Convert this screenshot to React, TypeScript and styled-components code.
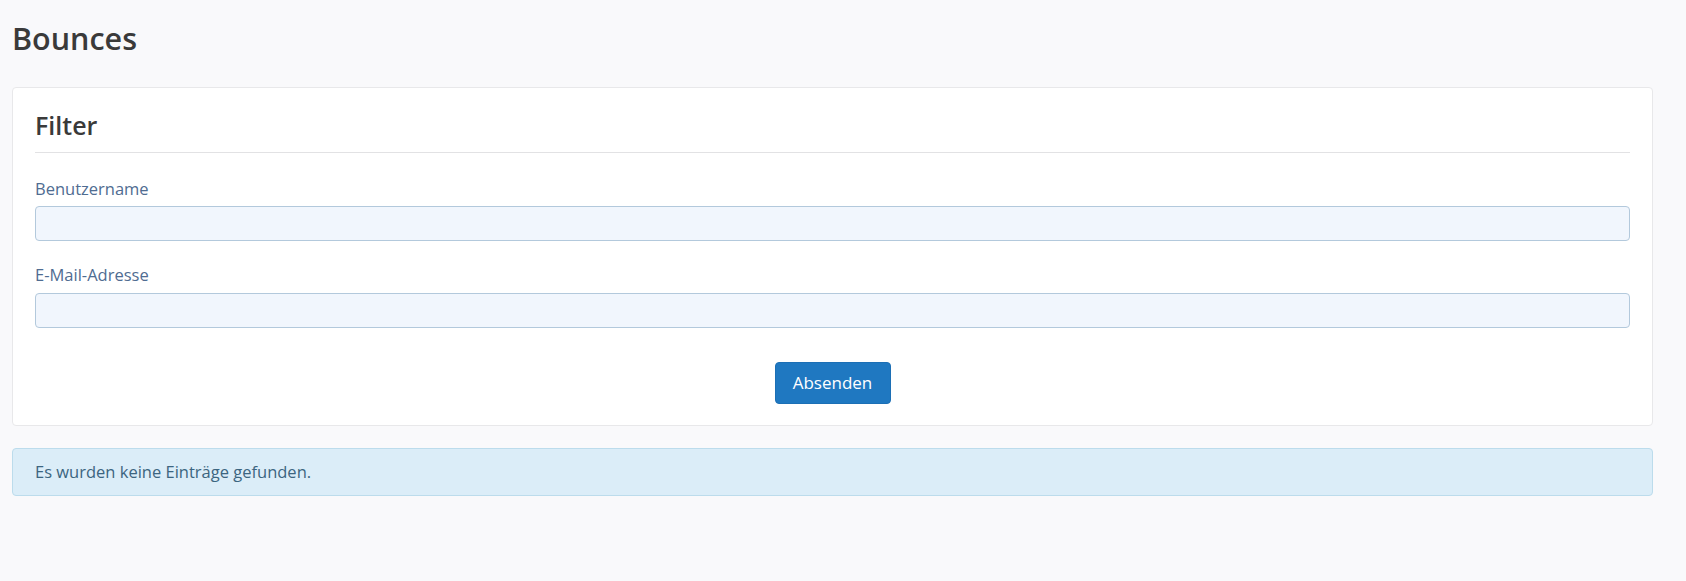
import React from "react";
import styled, { createGlobalStyle } from "styled-components";

const Global = createGlobalStyle`
  html, body { margin: 0; padding: 0; background: #f9f9fb; }
  body { font-family: "Open Sans", "Noto Sans", sans-serif; color: #333; }
  * { box-sizing: border-box; }
`;

const Page = styled.div`
  padding: 20px 33px 40px 12px;
  min-height: 581px;
`;

const Title = styled.h1`
  margin: 0 0 30px 0;
  font-size: 30.5px;
  line-height: 1.2;
  font-weight: 600;
  color: #3a3a3a;
`;

const Panel = styled.form`
  background: #fff;
  border: 1px solid #e8e8ea;
  border-radius: 4px;
  padding: 22px 22px 21px 22px;
  display: flex;
  flex-direction: column;
`;

const PanelTitle = styled.h2`
  margin: 0;
  padding-bottom: 12px;
  border-bottom: 1px solid #e2e2e4;
  font-size: 25px;
  line-height: 1.2;
  font-weight: 600;
  color: #3a3a3a;
`;

const Field = styled.div<{ $first?: boolean }>`
  display: flex;
  flex-direction: column;
  gap: 5px;
  margin-top: ${(p) => (p.$first ? "23px" : "21px")};
`;

const Label = styled.label`
  font-size: 16.5px;
  line-height: 1.55;
  color: #4f6c91;
`;

const Input = styled.input`
  height: 35px;
  width: 100%;
  border: 1px solid #b3c9dc;
  border-radius: 4px;
  background: #f1f6fd;
  font: inherit;
  font-size: 16px;
  padding: 0 10px;
  outline: none;
`;

const Actions = styled.div`
  display: flex;
  justify-content: center;
  margin-top: 34px;
`;

const Button = styled.button`
  height: 42px;
  width: 116px;
  border: 1px solid #1c6fb5;
  border-radius: 4px;
  background: #1f78c1;
  color: #fff;
  font-family: "Open Sans", sans-serif;
  font-size: 17px;
  cursor: pointer;
`;

const Alert = styled.div`
  margin-top: 22px;
  background: #dbedf8;
  border: 1px solid #bcdcec;
  border-radius: 4px;
  padding: 10px 22px;
  font-size: 16.5px;
  line-height: 1.55;
  color: #3c6580;
  min-height: 48px;
`;

export default function App() {
  return (
    <>
      <Global />
      <Page>
        <Title>Bounces</Title>
        <Panel onSubmit={(e) => e.preventDefault()}>
          <PanelTitle>Filter</PanelTitle>
          <Field $first>
            <Label htmlFor="user">Benutzername</Label>
            <Input id="user" type="text" />
          </Field>
          <Field>
            <Label htmlFor="mail">E-Mail-Adresse</Label>
            <Input id="mail" type="text" />
          </Field>
          <Actions>
            <Button type="submit">Absenden</Button>
          </Actions>
        </Panel>
        <Alert>Es wurden keine Einträge gefunden.</Alert>
      </Page>
    </>
  );
}
